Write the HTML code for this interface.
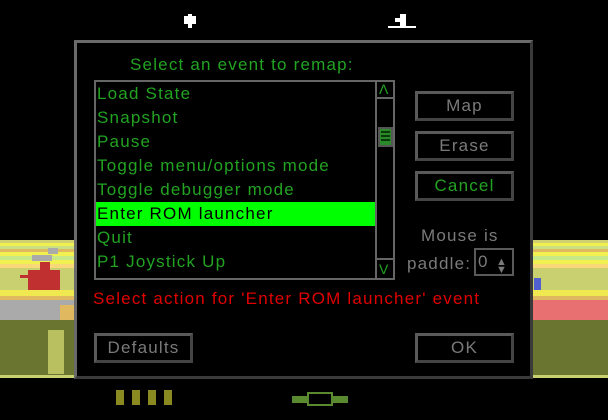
<!DOCTYPE html>
<html><head><style>
*{margin:0;padding:0;box-sizing:border-box}
body{width:608px;height:420px;background:#000;position:relative;overflow:hidden;font-family:"Liberation Sans",sans-serif}
.a{position:absolute}
.t{position:absolute;font-size:17px;line-height:24px;white-space:nowrap;letter-spacing:1.2px}
.g{color:#22a322}
.btn{position:absolute;border:3px solid #5a5a5a;border-bottom-color:#444;border-right-color:#444;color:#7a7a7a;font-size:17px;text-align:center;line-height:24px;letter-spacing:1.2px}
</style></head><body>
<div class="a" style="left:0;top:240px;width:608px;height:138px;background:linear-gradient(#d0d070 0 3px,#f0f050 3px 6px,#c8e080 6px 9px,#e0b860 9px 12px,#f0f050 12px 16px,#c8e888 16px 20px,#f0f050 20px 24px,#f8d878 24px 28px,#c8d070 28px 50px,#f0e850 50px 56px,#e0b860 56px 60px,#e0b860 60px 80px,#6a7530 80px 135px,#c8d070 135px 138px)"></div>
<div class="a" style="left:0;top:300px;width:80px;height:20px;background:#aaa"></div>
<div class="a" style="left:60px;top:305px;width:14px;height:15px;background:#e0b860"></div>
<div class="a" style="left:533px;top:300px;width:75px;height:20px;background:#e87070"></div>
<div class="a" style="left:48px;top:330px;width:16px;height:44px;background:#b8c060"></div>
<div class="a" style="left:28px;top:270px;width:32px;height:20px;background:#c03030"></div>
<div class="a" style="left:20px;top:275px;width:34px;height:3px;background:#c03030"></div>
<div class="a" style="left:40px;top:262px;width:10px;height:10px;background:#c03030"></div>
<div class="a" style="left:32px;top:255px;width:20px;height:6px;background:#aaa"></div>
<div class="a" style="left:48px;top:248px;width:10px;height:6px;background:#aaa"></div>
<div class="a" style="left:534px;top:278px;width:7px;height:12px;background:#5060d0"></div>
<div class="a" style="left:184px;top:16px;width:12px;height:8px;background:#fff"></div>
<div class="a" style="left:188px;top:14px;width:4px;height:14px;background:#fff"></div>
<div class="a" style="left:400px;top:14px;width:6px;height:14px;background:#fff"></div>
<div class="a" style="left:395px;top:18px;width:6px;height:4px;background:#fff"></div>
<div class="a" style="left:388px;top:26px;width:28px;height:2px;background:#fff"></div>
<div class="a" style="left:116px;top:390px;width:8px;height:15px;background:#8a8a20"></div>
<div class="a" style="left:132px;top:390px;width:8px;height:15px;background:#8a8a20"></div>
<div class="a" style="left:148px;top:390px;width:8px;height:15px;background:#8a8a20"></div>
<div class="a" style="left:164px;top:390px;width:8px;height:15px;background:#8a8a20"></div>
<div class="a" style="left:292px;top:396px;width:56px;height:7px;background:#5a8a30"></div>
<div class="a" style="left:307px;top:392px;width:26px;height:14px;background:#000;border:2px solid #5a8a30"></div>
<div class="a" style="left:74px;top:40px;width:459px;height:339px;background:#000;border:3px solid #6a6a6a;border-right-color:#3a3a3a;border-bottom-color:#3a3a3a"></div>
<div class="t g" style="left:130px;top:53px">Select an event to remap:</div>
<div class="a" style="left:94px;top:80px;width:301px;height:200px;border:2px solid #666"></div>
<div class="a" style="left:375px;top:80px;width:2px;height:200px;background:#666"></div>
<div class="a" style="left:377px;top:97px;width:18px;height:2px;background:#666"></div>
<div class="a" style="left:377px;top:258px;width:18px;height:2px;background:#666"></div>
<div class="t g" style="left:379px;top:81px;font-size:14px;line-height:16px;letter-spacing:0">&#923;</div>
<div class="t g" style="left:379px;top:261px;font-size:14px;line-height:16px;letter-spacing:0">V</div>
<div class="a" style="left:378px;top:127px;width:15px;height:20px;background:#2a8a2a;border:2px solid #555"></div>
<div class="a" style="left:381px;top:131px;width:9px;height:2px;background:#0a3a0a;box-shadow:0 4px #0a3a0a,0 8px #0a3a0a"></div>
<div class="a" style="left:96px;top:202px;width:279px;height:24px;background:#00ff00"></div>
<div class="t g" style="left:97px;top:82px">Load State</div>
<div class="t g" style="left:97px;top:106px">Snapshot</div>
<div class="t g" style="left:97px;top:130px">Pause</div>
<div class="t g" style="left:97px;top:154px">Toggle menu/options mode</div>
<div class="t g" style="left:97px;top:178px">Toggle debugger mode</div>
<div class="t" style="left:97px;top:202px;color:#000">Enter ROM launcher</div>
<div class="t g" style="left:97px;top:226px">Quit</div>
<div class="t g" style="left:97px;top:250px">P1 Joystick Up</div>
<div class="btn" style="left:415px;top:91px;width:99px;height:30px">Map</div>
<div class="btn" style="left:415px;top:131px;width:99px;height:30px">Erase</div>
<div class="btn" style="left:415px;top:171px;width:99px;height:30px;color:#22a322">Cancel</div>
<div class="t" style="left:421px;top:224px;color:#7a7a7a">Mouse is</div>
<div class="t" style="left:407px;top:252px;color:#7a7a7a">paddle:</div>
<div class="a" style="left:474px;top:248px;width:40px;height:28px;border:2px solid #5a5a5a"></div>
<div class="t" style="left:478px;top:250px;color:#7a7a7a">0</div>
<div class="t" style="left:496px;top:250px;color:#7a7a7a;font-size:11px;letter-spacing:0">&#9650;</div>
<div class="t" style="left:496px;top:258px;color:#7a7a7a;font-size:11px;letter-spacing:0">&#9660;</div>
<div class="t" style="left:93px;top:287px;color:#e00000">Select action for 'Enter ROM launcher' event</div>
<div class="btn" style="left:94px;top:333px;width:99px;height:30px">Defaults</div>
<div class="btn" style="left:415px;top:333px;width:99px;height:30px">OK</div>
</body></html>
